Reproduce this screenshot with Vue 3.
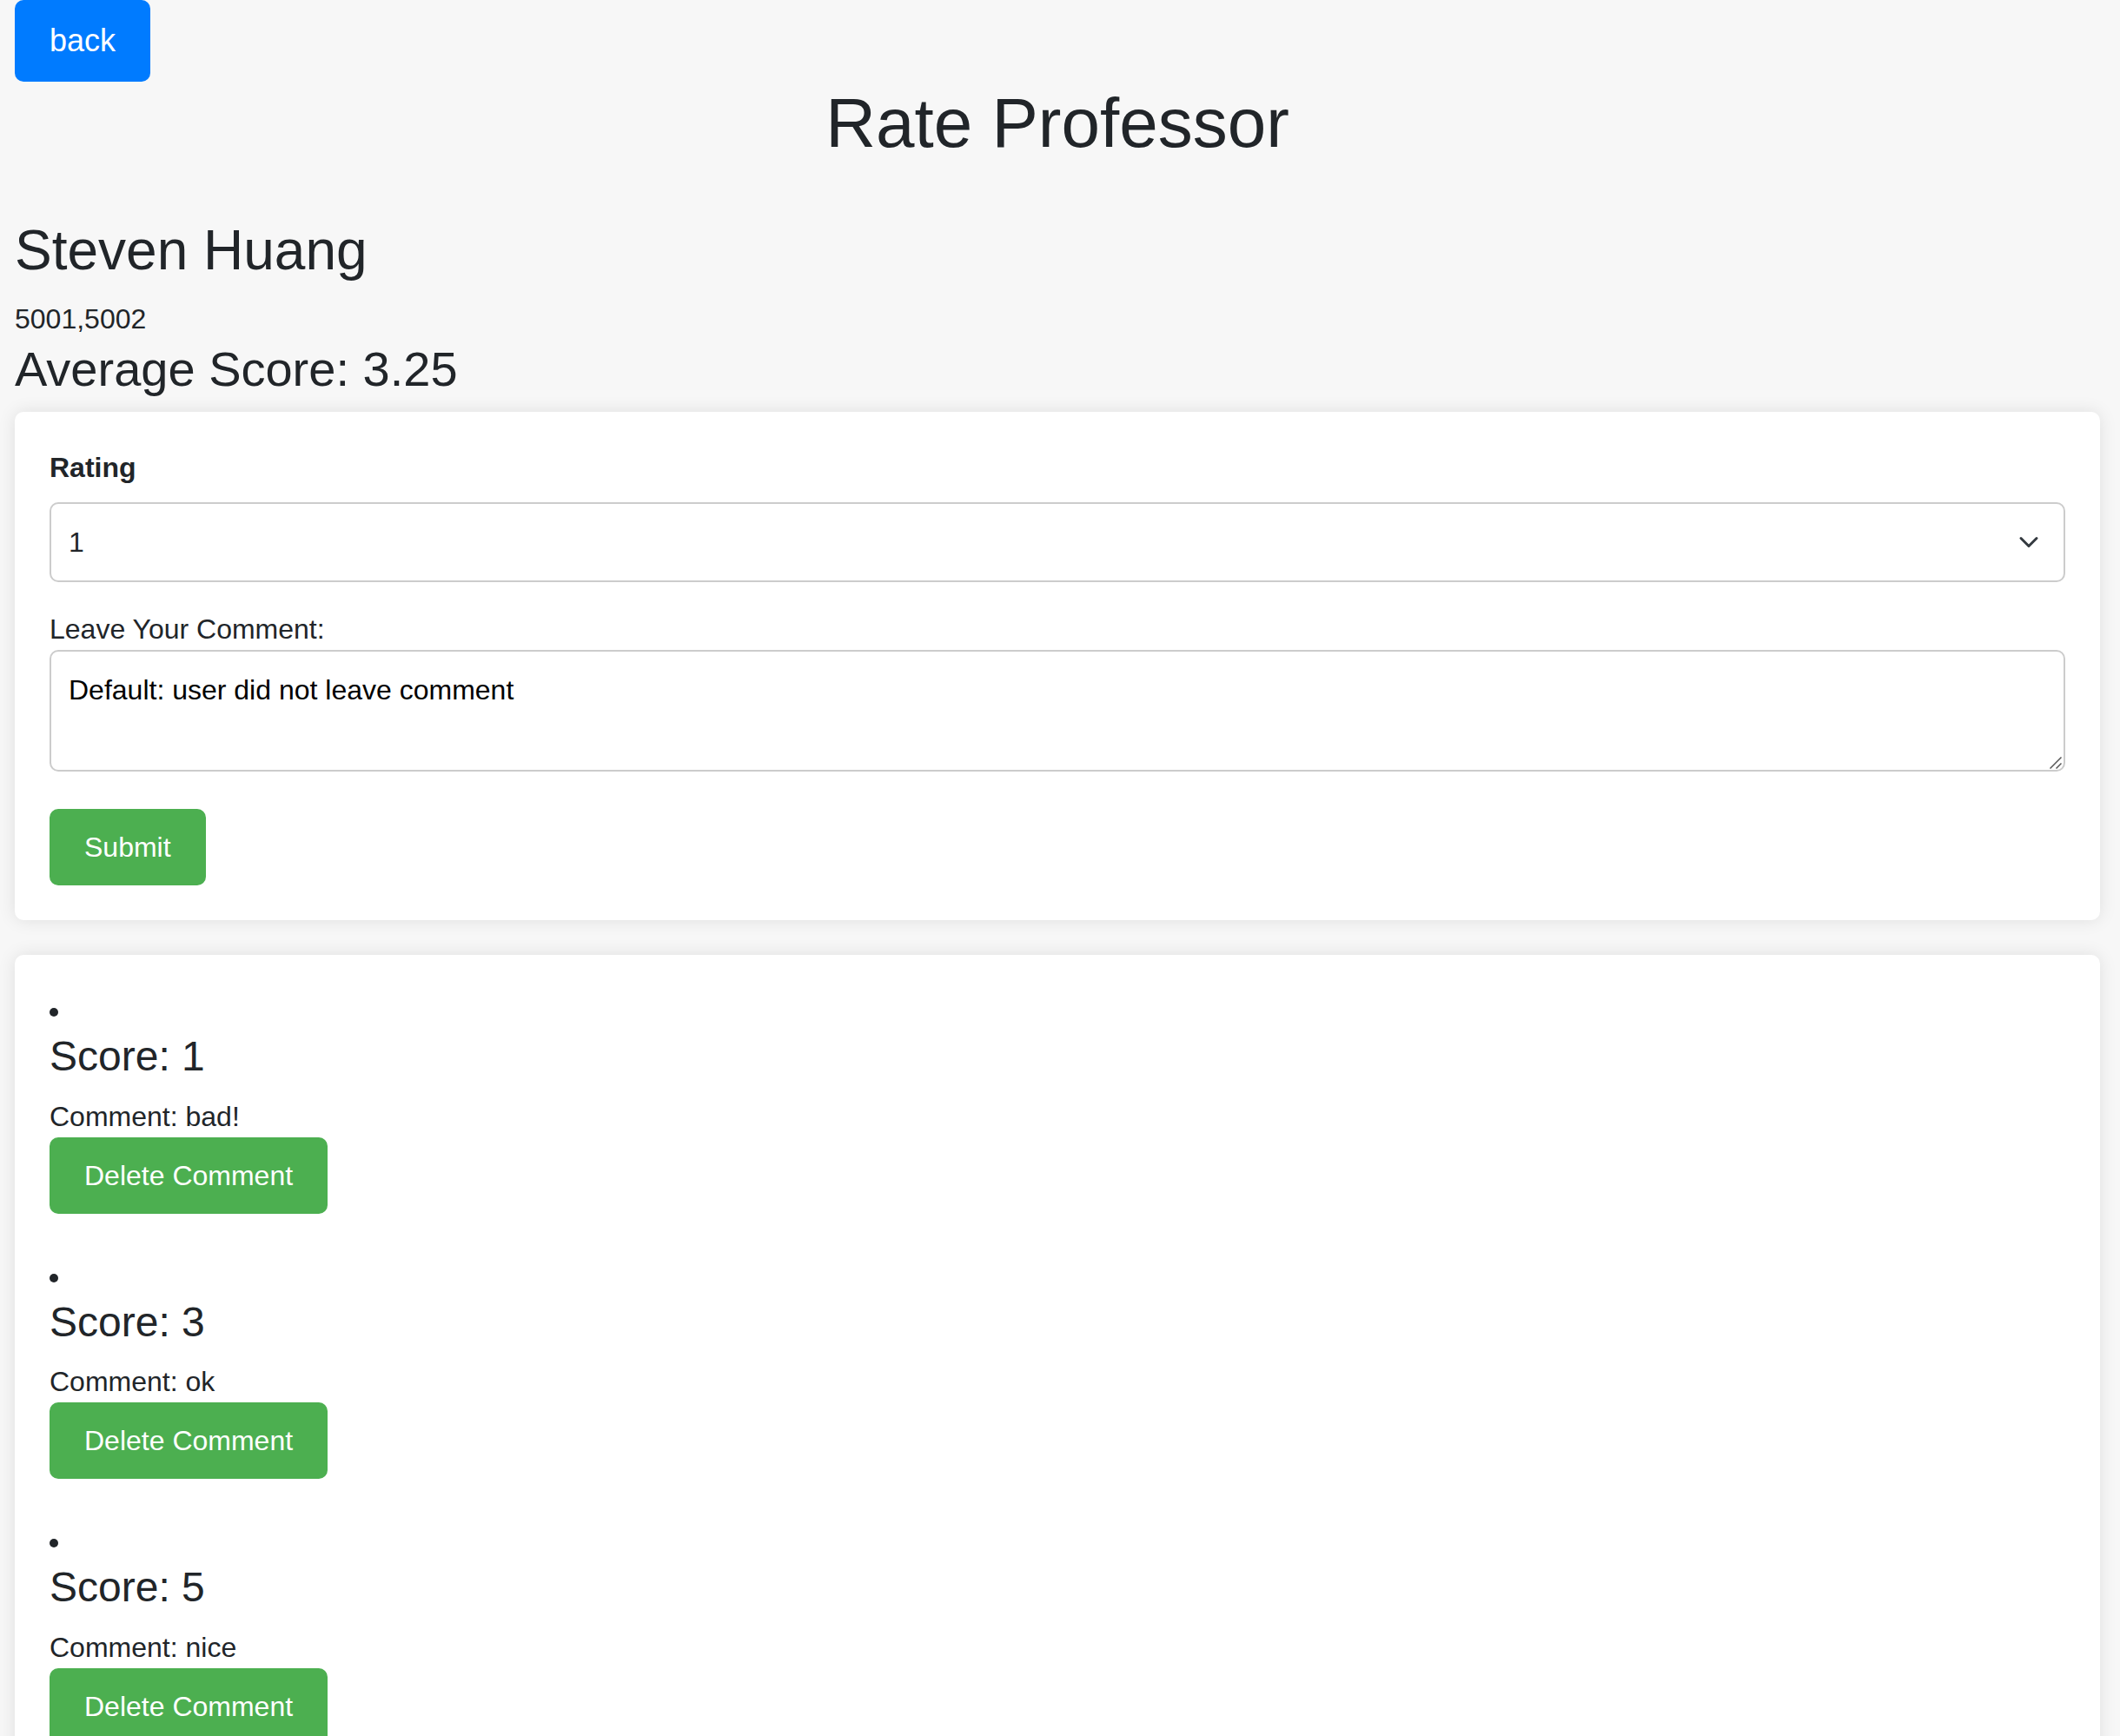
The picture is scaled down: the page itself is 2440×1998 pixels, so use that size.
<script setup>
import { ref } from 'vue'

const professor = { name: 'Steven Huang', courses: [5001, 5002], average: 3.25 }
const rating = ref(1)
const comment = ref('Default: user did not leave comment')
const reviews = ref([
  { id: 1, score: 1, comment: 'bad!' },
  { id: 2, score: 3, comment: 'ok' },
  { id: 3, score: 5, comment: 'nice' },
])

function submit() {
  reviews.value.push({ id: Date.now(), score: rating.value, comment: comment.value })
}

function remove(id) {
  reviews.value = reviews.value.filter((r) => r.id !== id)
}
</script>

<template>
  <main class="page">
    <button type="button" class="btn btn-back">back</button>
    <h1>Rate Professor</h1>
    <h2>{{ professor.name }}</h2>
    <p>{{ professor.courses.join() }}</p>
    <h3>Average Score: {{ professor.average }}</h3>

    <form class="card" @submit.prevent="submit">
      <label class="rating-label" for="rating">Rating</label>
      <div class="field">
        <select id="rating" v-model="rating">
          <option v-for="n in 5" :key="n" :value="n">{{ n }}</option>
        </select>
        <svg class="chevron" viewBox="0 0 16 16" aria-hidden="true">
          <path d="m2 5 6 6 6-6" fill="none" stroke="#343a40" stroke-width="2" stroke-linecap="round" stroke-linejoin="round" />
        </svg>
      </div>
      <label for="comment">Leave Your Comment:</label>
      <div class="field field-comment">
        <textarea id="comment" v-model="comment" rows="2"></textarea>
        <svg class="grip" viewBox="0 0 14 14" aria-hidden="true">
          <path d="M0.500 13.500 13.500 0.500M7.500 13.500 13.500 7.500" fill="none" stroke="#555" stroke-width="1.500" />
        </svg>
      </div>
      <button type="submit" class="btn">Submit</button>
    </form>

    <ul class="card reviews">
      <li v-for="review in reviews" :key="review.id">
        <h4>Score: {{ review.score }}</h4>
        <p>Comment: {{ review.comment }}</p>
        <button type="button" class="btn" @click="remove(review.id)">Delete Comment</button>
      </li>
    </ul>
  </main>
</template>

<style>
body {
  background: #f7f7f7;
}
</style>

<style scoped>
.page {
  box-sizing: border-box;
  height: 100vh;
  overflow-y: auto;
  scrollbar-width: none;
  padding: 0 23px 0 17px;
  background: #f7f7f7;
  color: #212529;
  font: 32px/48px "Liberation Sans", Arial, sans-serif;
}

h1,
h2,
h3,
h4 {
  margin: 0 0 16px;
  font-weight: 400;
  line-height: 1.2;
}

h1 {
  margin-bottom: 60px;
  font-size: 80px;
  text-align: center;
}

h2 {
  font-size: 64px;
}

h3 {
  font-size: 56px;
}

h4 {
  font-size: 48px;
}

p {
  margin: 0;
}

.btn {
  display: block;
  padding: 20px 40px;
  border: 0;
  border-radius: 10px;
  background: #4caf50;
  color: #fff;
  font: inherit;
  cursor: pointer;
}

.btn-back {
  background: #007bff;
  font-size: 36px;
  line-height: 54px;
}

.card {
  margin: 0 0 40px;
  padding: 40px;
  border-radius: 10px;
  background: #fff;
  box-shadow: 0 0 20px rgba(0, 0, 0, 0.1);
}

label {
  display: block;
}

.rating-label {
  margin-bottom: 16px;
  font-weight: 700;
}

.field {
  position: relative;
  margin-bottom: 30px;
}

.field-comment {
  margin-bottom: 43px;
}

select,
textarea {
  display: block;
  box-sizing: border-box;
  width: 100%;
  margin: 0;
  padding: 20px;
  border: 2px solid #ccc;
  border-radius: 10px;
  background: #fff;
  color: #212529;
  font: inherit;
  appearance: none;
}

textarea {
  color: #000;
  resize: none;
}

.chevron {
  position: absolute;
  top: 34px;
  right: 26px;
  width: 32px;
  height: 24px;
  pointer-events: none;
}

.grip {
  position: absolute;
  right: 4px;
  bottom: 3px;
  width: 14px;
  height: 14px;
  pointer-events: none;
}

.reviews {
  list-style: disc inside;
}

.reviews li {
  margin-bottom: 48px;
}
</style>
